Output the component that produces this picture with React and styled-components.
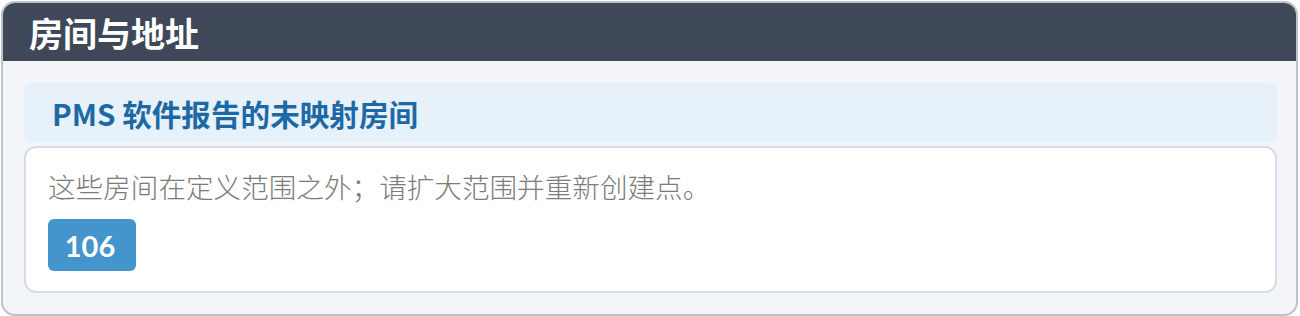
import React from 'react';
import styled, { createGlobalStyle } from 'styled-components';

const GlobalStyle = createGlobalStyle`
  html, body {
    margin: 0;
    padding: 0;
    background: #ffffff;
  }
  body {
    padding: 1px;
    font-family: Lato, "Noto Sans CJK SC", sans-serif;
  }
`;

const Panel = styled.section`
  width: 1297px;
  box-sizing: border-box;
  border: 2px solid #bcc3cd;
  border-radius: 14px;
  overflow: hidden;
  background: #f3f5f8;
`;

const PanelHeader = styled.header`
  height: 58px;
  background: #3e4858;
  display: flex;
  align-items: center;
  padding: 0 26px;
  color: #ffffff;
  font-size: 34px;
  font-weight: 700;
`;

const PanelBody = styled.div`
  padding: 22px 19px 21px 21px;
  display: flex;
  flex-direction: column;
  gap: 3px;
`;

const SubHeader = styled.div`
  height: 60px;
  background: #e7f1fa;
  border-radius: 8px;
  display: flex;
  align-items: center;
  padding: 0 28px;
  color: #1d69a6;
  font-family: "Noto Sans CJK SC", sans-serif;
  font-size: 29.6px;
  font-weight: 700;
`;

const Card = styled.div`
  background: #ffffff;
  border: 2px solid #d5dce5;
  border-radius: 12px;
  padding: 21px 22px 20px;
  display: flex;
  flex-direction: column;
  align-items: flex-start;
  gap: 16px;
`;

const Note = styled.p`
  margin: 0;
  line-height: 34px;
  font-family: "Noto Sans CJK SC", sans-serif;
  font-size: 27.6px;
  font-weight: 300;
  color: #7b7b7b;
`;

const RoomTag = styled.span`
  display: inline-flex;
  align-items: center;
  justify-content: center;
  box-sizing: border-box;
  width: 88px;
  height: 52px;
  padding-right: 4px;
  border-radius: 6px;
  background: #4395cb;
  color: #ffffff;
  font-size: 29px;
  font-weight: 700;
`;

export default function App() {
  return (
    <>
      <GlobalStyle />
      <Panel>
        <PanelHeader>房间与地址</PanelHeader>
        <PanelBody>
          <SubHeader>PMS 软件报告的未映射房间</SubHeader>
          <Card>
            <Note>这些房间在定义范围之外；请扩大范围并重新创建点。</Note>
            <RoomTag>106</RoomTag>
          </Card>
        </PanelBody>
      </Panel>
    </>
  );
}
